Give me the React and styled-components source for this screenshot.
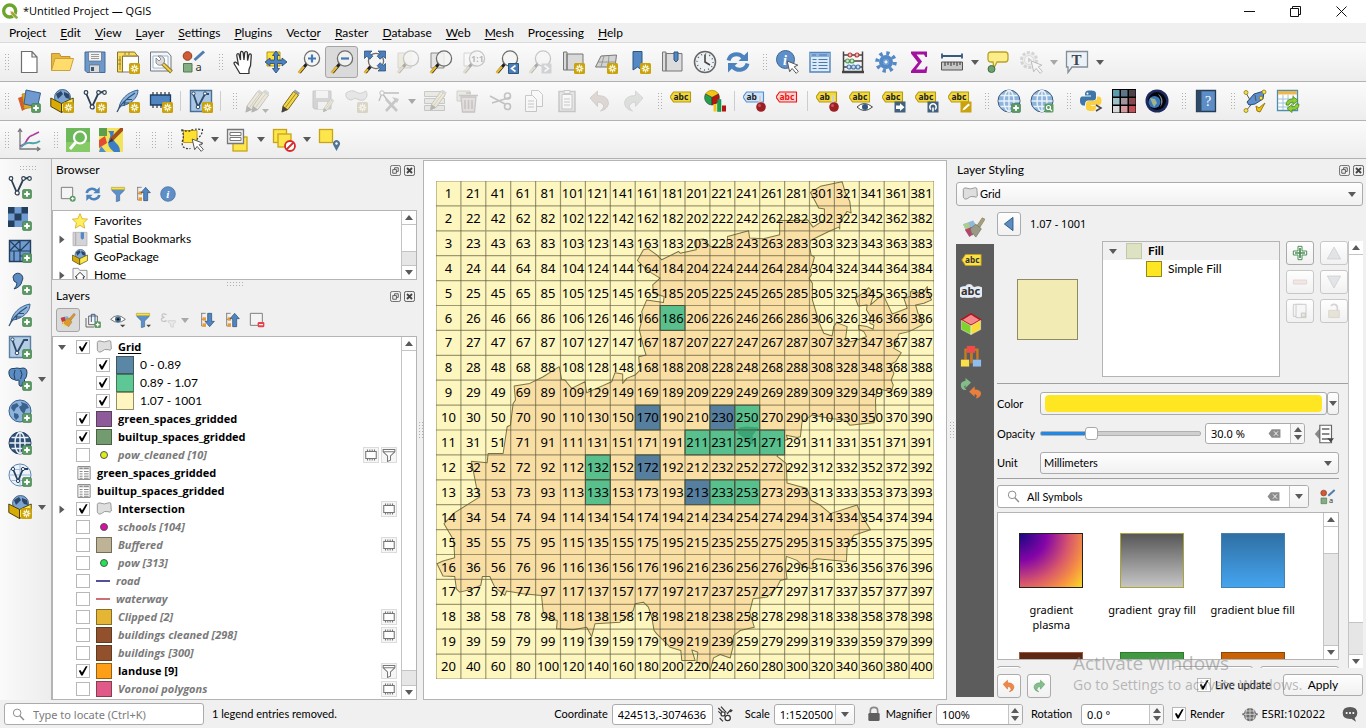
import React from "react";
import styled, { createGlobalStyle, css } from "styled-components";

const uiFont = '"Open Sans", "Noto Sans", sans-serif';
const formFont = '"Noto Sans", "Open Sans", sans-serif';
const labelFont = 'Lato, "Open Sans", sans-serif';

const GlobalStyle = createGlobalStyle`
  * { box-sizing: border-box; }
  body { margin: 0; background: #f0f0f0; color: #000; font: 12px/16px ${uiFont}; overflow: hidden; }
  button, input, select { font: inherit; color: inherit; margin: 0; padding: 0; }
  svg { display: block; flex: none; }
`;

/* ---------- icon drawings, all on a 24 x 24 field ---------- */

const StarBadge = () => (
  <g>
    <rect x="13" y="13" width="11" height="11" rx="1.5" fill="#c9a20c" />
    <path d="M18.500 14.600v7.800M14.600 18.500h7.800M15.800 15.800l5.400 5.400M21.200 15.800l-5.400 5.400" stroke="#fffbe0" strokeWidth="1.300" />
    <circle cx="18.500" cy="18.500" r="1.100" fill="#c9a20c" />
  </g>
);
const PlusBadge = () => (
  <g>
    <rect x="14.5" y="14.5" width="9" height="9" rx="1.5" fill="#5b9a62" stroke="#3f7a48" strokeWidth=".6" />
    <path d="M19 16.2v5.6M16.2 19h5.6" stroke="#fff" strokeWidth="2" />
  </g>
);
const Lens = ({ cx = 15, cy = 8.5 }) => (
  <g>
    <path d={`M${cx - 5} ${cy + 5}L2.5 22.5`} stroke="#222" strokeWidth="3" />
    <path d={`M${cx - 8} ${cy + 8.2}L1.5 23`} stroke="#e8b92e" strokeWidth="2.4" />
    <circle cx={cx} cy={cy} r="7.6" fill="#f4f4f2" fillOpacity=".85" stroke="#6d6d6d" strokeWidth="1.3" />
  </g>
);
const Tag = ({ fill = "#f2d83a", line = "#b39a12", ink = "#222", text = "abc" }) => (
  <g>
    <path d="M0 8L3.500 3H20.500V13H3.500Z" fill={fill} stroke={line} strokeWidth="1.1" strokeLinejoin="round" />
    <text x="3.500" y="11" fontSize="8.5" fontWeight="700" fontFamily="Noto Sans, sans-serif" fill={ink}>{text}</text>
  </g>
);
const Pin = () => (
  <g>
    <path d="M17 6.5v8" stroke="#fff" strokeWidth="2.4" />
    <path d="M17 6.5v8" stroke="#888" strokeWidth=".8" />
    <circle cx="18" cy="18" r="4.8" fill="#9c1f24" />
    <circle cx="16.500" cy="16.5" r="1.5" fill="#cb5458" />
  </g>
);
const Globe = ({ fill = "#8eb4dc", line = "#38597f", land }) => (
  <g>
    <circle cx="12" cy="12" r="11" fill={fill} stroke={line} strokeWidth="1" />
    {land ? (
      <path d="M4 6l5-2 2 3-3 2-2 4-3-4ZM13 3l6 2 2 4-3 1-2 5-3-3-2-4 3-2ZM6 14l4 1 1 3-3 3-2-3Z" fill={line} />
    ) : (
      <g fill="none" stroke="#e9f1f9" strokeWidth="1.4">
        <ellipse cx="12" cy="12" rx="5" ry="10.5" />
        <path d="M12 1.5v21M1.5 12h21M3.5 6.5h17M3.5 17.5h17" />
      </g>
    )}
  </g>
);
const VLine = ({ c = "#2d3f52" }) => (
  <g stroke={c} fill="none" strokeWidth="1.8">
    <path d="M3 4L9 18L15 5q1-2 5-2" />
    <g fill="#fff" strokeWidth="1.2">
      <circle cx="3" cy="3.5" r="1.8" /><circle cx="9.2" cy="18" r="2" /><circle cx="15.5" cy="3.5" r="1.8" /><circle cx="21.5" cy="3.5" r="1.8" />
    </g>
  </g>
);
const Feather = () => (
  <g>
    <path d="M3 19C4 11 11 3 22 1C22 9 15 15 5.500 17Z" fill="#8fb5df" stroke="#3c6490" strokeWidth="1" />
    <path d="M1 23Q5 13 19 4M7 14h6M10 10.500h6M8 17l1-5" stroke="#2f5379" strokeWidth="1.2" fill="none" />
  </g>
);
const GeoBox = () => (
  <g>
    <circle cx="12.500" cy="8.500" r="8" fill="#7da5d3" stroke="#2b4a70" strokeWidth=".8" />
    <path d="M6 5l5-3 2 3-3 3-2 2ZM14 3l5 2 1 5-4-1-2-3Z" fill="#2c4668" />
    <path d="M.800 9L11.500 14.500V23.500L.800 17.500Z" fill="#d9ab05" stroke="#3d3200" strokeWidth=".9" />
    <path d="M11.500 14.500L23.200 9V17.500L11.500 23.500Z" fill="#fbe94e" stroke="#3d3200" strokeWidth=".9" />
  </g>
);
const Arrows = ({ c = "#4c82bd" }) => (
  <g fill="none" stroke={c} strokeWidth="4">
    <path d="M2.500 10.500C4 4 12 2 17 7" /><path d="M21.500 13.500C20 20 12 22 7 17" />
    <path d="M22 1.500V11h-9.500Z" fill={c} stroke="none" /><path d="M2 22.500V13h9.500Z" fill={c} stroke="none" />
  </g>
);
const Funnel = ({ line = "#35597f" }) => (
  <g>
    <path d="M3 3h18v4l-6.500 6.500V22l-5 1.500V13.500L3 7Z" fill="#5c90cc" stroke={line} strokeWidth=".8" />
    <path d="M2 2h20v3.500H2Z" fill="#f6e04c" stroke="#b79c1a" strokeWidth=".8" />
  </g>
);
const Pencil = () => (
  <g>
    <path d="M5 17L15.500 2.500L20.500 6L10 20.500L4 23Z" fill="#f4d548" stroke="#7a6a1a" strokeWidth="1" />
    <path d="M15.500 2.500l1.500-2 5 3.500-1.500 2Z" fill="#9aa0a6" /><path d="M5 17l5 3.500L3.500 23.500Z" fill="#444" />
    <path d="M7.500 18.500L18 4.300" stroke="#a08a22" strokeWidth="1" />
  </g>
);
const Polygon = () => (
  <path d="M2 5Q3 2 6 3Q12 6 20 2.500Q23 2 22.500 7L23 15Q22 18 18 16Q13 14 8 19Q3 21 2 16Z" fill="#dedede" stroke="#8c8c8c" strokeWidth="1.3" />
);
const Cursor = () => (
  <path transform="translate(4 4.500) scale(.820)" d="M10 8l3 13 3-4 5 6 2.500-2.500-5-5.500 4.500-2Z" fill="#fff" stroke="#555" strokeWidth="1.200" />
);
const Brush = ({ tone = "#e09a2c" }) => (
  <g>
    <path d="M1 9l10-3 5 8-9 7Z" fill="#7fb3dd" /><path d="M1 9l6-2 2 8-5 3Z" fill="#c7383f" /><path d="M3 15l6-2 4 5-6 4Z" fill="#f3dd4b" />
    <path d="M13 11L21 2l2 2-7 9Z" fill={tone} stroke="#7d6a44" strokeWidth=".7" />
    <path d="M9 11l4-2 5 6-5 7-7-5Z" fill={tone} stroke="#8b7b55" strokeWidth=".7" />
  </g>
);
const BrushMuted = () => (
  <g>
    <path d="M0 9l11-4 6 9-9 8Z" fill="#8fb9da" /><path d="M0 9l6-2 2 6-5 3Z" fill="#a9cf8e" /><path d="M2 15l7-3 4 6-6 5Z" fill="#b3476b" />
    <path d="M15 11l6-9 3 1.500-6 9.500Z" fill="#a8a078" stroke="#827b5c" strokeWidth=".700" />
    <path d="M8 14l6-5 6 5-6 9q-2-2-3-4l-1 2Z" fill="#9a9b86" stroke="#75765f" strokeWidth=".800" />
  </g>
);
const TreeArrow = ({ up }) => (
  <g>
    <path d="M3 2h7M4 2v19h6M4 11h5" stroke="#777" strokeWidth="1.3" fill="none" />
    <rect x="5.500" y="8" width="5" height="5" fill="#f09a2e" /><rect x="5.500" y="17" width="5" height="5" fill="#f09a2e" />
    <path d={up ? "M16 2l7 8h-4v12h-6V10H9Z" : "M16 22l7-8h-4V2h-6v12H9Z"} fill="#4f86c2" stroke="#27496f" strokeWidth="1" />
  </g>
);
const Yellow = ({ x, y, s = 11 }) => <rect x={x} y={y} width={s} height={s} fill="#fde64b" stroke="#c8a514" strokeWidth="1.3" />;

const art = {
  qgis: <g><circle cx="11.500" cy="12" r="9" fill="none" stroke="#6aa62e" strokeWidth="5" /><path d="M12 12l4 .500L24 21l-4 2.500-7-7.500Z" fill="#f0902c" stroke="#fff" strokeWidth=".8" /><path d="M15 15l8 8" stroke="#7cb342" strokeWidth="3" /></g>,
  page: <path d="M4.500 1.500H15l5 5.500v15.500h-15.500ZM15 1.500V7h5" fill="#fff" stroke="#6e6e6e" strokeWidth="1.2" />,
  folder: <g><path d="M1.500 20.500V3.500h8l1.500 3h9v3" fill="#e7b73f" stroke="#c1922d" /><path d="M1.500 20.500L5 8.500h18.500L20 20.500Z" fill="#ffdc6b" stroke="#cba23a" /></g>,
  save: <g><path d="M2 2h20v20.500H4L2 20.500Z" fill="#6c98cb" stroke="#426a9a" /><path d="M5.500 2h13v9h-13Z" fill="#f2f2f2" stroke="#5c6b7c" strokeWidth=".7" /><path d="M8 4.500h8M8 6.500h8M8 8.500h8" stroke="#999" /><path d="M6.500 15h10v7.500h-10Z" fill="#dcdcdc" stroke="#5c6b7c" strokeWidth=".7" /><path d="M8 17h3v4H8Z" fill="#40566e" /></g>,
  newLayout: <g><path d="M6 6h16.500v16H6Z" fill="#fff" stroke="#777" /><path d="M1.500 2h17l3 4H6.500v16h-5Z" fill="#f8dc66" stroke="#8a7420" /><path d="M4 6v14M9 2v3M13 2v3M2 10h3M2 14h3" stroke="#8a7420" strokeWidth=".8" /><StarBadge /></g>,
  manager: <g><path d="M1.500 2h17l3.500 4v15h-20.500Z" fill="#f2f6fa" stroke="#777" /><path d="M4 6h15v12H4Z" fill="#fff" stroke="#9cb6d4" /><path d="M13 13l9.500 9" stroke="#8d7723" strokeWidth="4" /><path d="M13 13l9 8.500" stroke="#f1cf4c" strokeWidth="2" /><path d="M7 8l3 3 2-2-3-3q4-1 6 2t-1 6q-4 3-7-1Z" fill="#ddd" stroke="#777" strokeWidth=".8" /></g>,
  styles: <g><circle cx="5.500" cy="6" r="4.300" fill="#cf5c34" stroke="#8d3a1d" /><path d="M22 1.500L12.500 10" stroke="#4f7db0" strokeWidth="3" /><path d="M1.500 13.500h8.500v8.500H1.500Z" fill="#84ad84" stroke="#4f7d52" /><text x="13.500" y="21" fontSize="11" fontFamily="Noto Sans, sans-serif" fill="#333">a</text></g>,
  hand: <path d="M7.500 23.500L3 15.500q-2.500-3.500.500-3.500l2.500 2.500-1.500-9q0-2.500 2-1.500l1.500 6L8 2.500q1-2.200 2.500 0l.800 7.500.700-7.500q1.300-2 2.500 0l.200 8 1.300-6q1.500-1.500 2.200.500l-.700 10.500-1.500 4v4Z" transform="translate(1 0) scale(1.060 1)" fill="#fff" stroke="#333" strokeWidth="1.200" />,
  pan: <g><path d="M3 2h13v14H3Z" fill="#fbe13d" stroke="#b6960f" /><path d="M12 1l3.500 4.500h-2v4.500H18V8l5 4-5 4v-2.500h-4.500v5h2L12 23l-3.500-4.500h2V13.500H6V16l-5-4 5-4v2h4.500V5.500h-2Z" fill="#4c82c4" stroke="#24466f" strokeWidth=".8" /></g>,
  zoomIn: <g><Lens /><path d="M15 4.500v8M11 8.500h8" stroke="#4478b8" strokeWidth="2.200" /></g>,
  zoomOut: <g><Lens /><path d="M11 8.500h8" stroke="#4478b8" strokeWidth="2.200" /></g>,
  zoomFull: <g><Lens cx={13} cy={11} /><path d="M1.500 1h7.500L6.800 3.200l3 3-3 3-3-3L1.500 8.500ZM22.500 1h-7.500l2.200 2.200-3 3 3 3 3-3 2.300 2.300ZM22.500 21v-7.500l-2.300 2.200-3-3-3 3 3 3-2.200 2.300Z" fill="#4b7fbd" stroke="#24466f" strokeWidth=".7" /></g>,
  zoomSel: <g><path d="M2 3h13v15H2Z" fill="#f3dc55" stroke="#999" /><Lens /></g>,
  zoomLayer: <g><path d="M2 3h13v15H2Z" fill="#e4e4e4" stroke="#8b8b8b" /><Lens /></g>,
  zoomNative: <g><path d="M2 3h12v13H2Z" fill="#fff" stroke="#999" /><Lens /><text x="9" y="12" fontSize="9" fontWeight="700" fontFamily="Noto Sans, sans-serif" fill="#444">1:1</text></g>,
  zoomLast: <g><Lens /><path d="M13.500 13.500h10v10h-10Z" fill="#4a7db8" stroke="#2c5580" /><path d="M20.500 15.500l-4 3 4 3" stroke="#fff" strokeWidth="1.600" fill="none" /></g>,
  zoomNext: <g><Lens /><path d="M13.500 13.500h10v10h-10Z" fill="#8a9aaa" /><path d="M16.500 15.500l4 3-4 3" stroke="#fff" strokeWidth="1.600" fill="none" /></g>,
  mapView: <g><path d="M2.500 2h3.500v18H2.500ZM6 4h16v16H6Z" fill="#d9d9d9" stroke="#777" /><StarBadge /></g>,
  map3d: <g><path d="M1.500 17L7 6l15.500-1-1.500 12Z" fill="#d3d3d3" stroke="#777" /><path d="M4 12h18M10 6L7 17M15 5.500L14 17" stroke="#8c8c8c" strokeWidth=".8" /><StarBadge /></g>,
  newMark: <g><path d="M6 1.500h9V20l-4.500-3L6 20Z" fill="#5488c4" stroke="#2c5580" /><StarBadge /></g>,
  marks: <g><path d="M2.500 2h3.500v19H2.500ZM6 3.500h16V21H6Z" fill="#dcdcdc" stroke="#777" /><path d="M14 2h4v8l-2 2-2-2Z" fill="#5488c4" stroke="#2c5580" /></g>,
  clock: <g><circle cx="12" cy="12" r="10.500" fill="#eef1f3" stroke="#666" strokeWidth="1.500" /><circle cx="12" cy="12" r="8" fill="none" stroke="#567" strokeDasharray="1 3.190" strokeWidth="1.500" /><path d="M12 4.500V12l5 3" fill="none" stroke="#444" strokeWidth="1.600" /></g>,
  refresh: <Arrows />,
  identify: <g><circle cx="10.500" cy="9.500" r="9" fill="#5e8fc9" stroke="#3e6795" /><text x="8" y="14.500" fontSize="14" fontStyle="italic" fontWeight="700" fontFamily="Liberation Serif, serif" fill="#fff">i</text><Cursor /></g>,
  table: <g><path d="M2 2.500h20v19.500H2Z" fill="#dcebf9" stroke="#5484ba" strokeWidth="1.400" /><path d="M2 3h20v4H2Z" fill="#8bb2df" /><path d="M4.500 9.500h4M10.500 9.500h9M4.500 12.500h4M10.500 12.500h9M4.500 15.500h4M10.500 15.500h9M4.500 18.500h4M10.500 18.500h9M4 5h4M11 5h8" stroke="#4d7ba9" strokeWidth="1.200" /></g>,
  abacus: <g><path d="M2.500 1.500v20M21.500 1.500v20M3 5h18M3 11h18M3 17h18" stroke="#444" strokeWidth="1.500" /><path d="M1 22h22" stroke="#444" strokeWidth="2.500" /><g strokeWidth="1.200"><g fill="#f5b5b5" stroke="#b83a3a"><circle cx="9" cy="5" r="2" /><circle cx="16" cy="5" r="2" /></g><g fill="#c6ebc6" stroke="#53985a"><circle cx="6.500" cy="11" r="2" /><circle cx="11" cy="11" r="2" /></g><g fill="#cbe0f5" stroke="#4978ad"><circle cx="8" cy="17" r="2" /><circle cx="12.500" cy="17" r="2" /><circle cx="17" cy="17" r="2" /></g></g></g>,
  gear: <g><circle cx="12" cy="12" r="8.800" fill="none" stroke="#5489c6" strokeWidth="4" strokeDasharray="3.200 3.710" /><circle cx="12" cy="12" r="5" fill="#8db4e0" stroke="#5489c6" strokeWidth="4" /><circle cx="12" cy="12" r="2.200" fill="#f2f6fb" stroke="#5489c6" /></g>,
  sigma: <path d="M4 1.500h16v5.500h-1.500L17 4.500H9.500L15 11.500 9 19.500h8.500l1.500-3h1.500l-1 6.500H4v-2l7-8.500L4 3.500Z" fill="#a3119f" />,
  measure: <g><path d="M2 3.500v5M22 3.500v5M2 6h20" stroke="#36597f" strokeWidth="1.800" /><path d="M1.500 12h21v8h-21Z" fill="#c6c6c6" stroke="#555" /><path d="M5 12v4M8 12v3M11 12v4M14 12v3M17 12v4M20 12v3" stroke="#333" /></g>,
  tip: <g><path d="M5 2h14q3 0 3 3v4q0 3-3 3h-8l-3 6-1-6H5q-3 0-3-3V5q0-3 3-3Z" fill="#fbed8a" stroke="#bba125" strokeWidth="1.300" /><circle cx="5.500" cy="19" r="3.500" fill="#6da26f" stroke="#3e6f42" /></g>,
  action: <g><circle cx="10" cy="10" r="7.500" fill="#dedede" stroke="#999" strokeWidth="3" strokeDasharray="3 1.710" /><circle cx="10" cy="10" r="4.500" fill="#f5f5f5" stroke="#aaa" /><path d="M9 7.500l4 2.500-4 2.500Z" fill="#888" /><Cursor /></g>,
  annot: <g><path d="M1.500 1.500h21v15.500H7L3 22.500V17H1.500Z" fill="#eaf1f8" stroke="#858d95" strokeWidth="1.300" /><text x="6.500" y="14.500" fontSize="15" fontWeight="700" fontFamily="Liberation Serif, serif" fill="#444">T</text></g>,

  dataSource: <g><path d="M1 9l8-3 4 11-8 5Z" fill="#d65b31" /><path d="M5 5l10-2 2 15-10 2Z" fill="#e0a717" stroke="#9d7313" strokeWidth=".6" /><path d="M9 1l14.500 3-3 14L7 15Z" fill="#6f99cf" stroke="#365f8f" /><PlusBadge /></g>,
  geopkg: <g><GeoBox /><StarBadge /></g>,
  geopkgPlain: <GeoBox />,
  shape: <g><VLine /><StarBadge /></g>,
  feather: <g><Feather /><StarBadge /></g>,
  chip: <g><path d="M4 3v16M8 3v16M12 3v16M16 3v16M20 3v16" stroke="#333" strokeWidth="1.200" /><path d="M1.500 6h20v10h-20Z" fill="#5185c1" stroke="#1f4064" strokeWidth="1.300" /><StarBadge /></g>,
  virtual: <g><path d="M1.500 1.500h21v21h-21Z" fill="#a9c6e5" stroke="#4a6f97" strokeWidth="1.400" /><path d="M4 4L9 18L16 5h4" fill="none" stroke="#2d4a68" strokeWidth="1.800" /><g fill="#fff" stroke="#2d4a68"><circle cx="4.500" cy="4.500" r="1.600" /><circle cx="9" cy="18" r="1.800" /><circle cx="16" cy="4.500" r="1.600" /></g><StarBadge /></g>,
  edits: <g><g transform="translate(-3 0)"><Pencil /></g><g transform="translate(3 0)"><Pencil /></g><path d="M17 20h7l-3.500 4Z" fill="#444" /></g>,
  pencil: <Pencil />,
  saveEdit: <g><path d="M2 2h18v18H3.500L2 18.500Z" fill="#9a9a9a" stroke="#777" /><path d="M5 2h12v7H5ZM7 13h9v7H7Z" fill="#eee" /><g transform="translate(10 9) scale(.600)"><Pencil /></g></g>,
  addPoly: <g><path d="M2 4q6-4 10-1t10-1q3 5-2 9-4 1-7-1t-5 1q-7 0-6-7Z" fill="#c9c9c9" stroke="#888" /><StarBadge /></g>,
  vertex: <g><path d="M2 12L5 4h17M5 4l6 8" stroke="#555" strokeWidth="1.300" fill="none" /><circle cx="5" cy="4" r="2.200" fill="#fff" stroke="#555" /><path d="M9 10l11 12M20 10L9 22" stroke="#777" strokeWidth="2.600" /><path d="M15 8l7 2-2 4Z" fill="#777" /></g>,
  modify: <g><path d="M1.500 2.500h20v5h-20ZM1.500 9.500h20v5h-20ZM1.500 16.500h20v5h-20Z" fill="#d2d2ae" stroke="#777" /><g transform="translate(4 0) scale(.900)"><Pencil /></g></g>,
  trash: <g><path d="M1 2h13v10H1Z" fill="#d9d5a0" stroke="#888" /><path d="M5 8h15l-1.500 15h-12Z" fill="#d8b4b4" stroke="#966" strokeWidth="1.300" /><path d="M3 6.500h19M9 11v9M12.500 11v9M16 11v9M10 4h5" stroke="#966" strokeWidth="1.600" /></g>,
  cut: <g stroke="#666" strokeWidth="1.600" fill="none"><path d="M1 7l15 8M3 14L22 8" /><circle cx="18.500" cy="7" r="3" /><circle cx="18.500" cy="17.500" r="3" /></g>,
  copy: <g fill="#fff" stroke="#777"><path d="M9.500 1.500h7l4 4v12h-11Z" /><path d="M3.500 6.500h7l4 4v12h-11Z" /><path d="M6 12h6M6 15h6M6 18h6" /></g>,
  paste: <g stroke="#777"><path d="M4 2.500h16v20H4Z" fill="#ccc" strokeWidth="1.500" /><path d="M7 5.500h10V20H7Z" fill="#fff" /><path d="M9 1.500h6v3H9Z" fill="#eee" /><path d="M9 10h6M9 13h6M9 16h6" /></g>,
  undo: <path d="M2 9L9.500 2v4.500q11 0 11 8-1 6-8 7.500 5-4 2-7-2-2-5-2v4.500Z" fill="#d39a80" stroke="#a0705a" strokeWidth=".800" />,
  redo: <path d="M22 9L14.500 2v4.500q-11 0-11 8 1 6 8 7.500-5-4-2-7 2-2 5-2v4.500Z" fill="#a9bfa9" stroke="#7b967b" strokeWidth=".800" />,
  undoHot: <path d="M2 9L9.500 2v4.500q11 0 11 8-1 6-8 7.500 5-4 2-7-2-2-5-2v4.500Z" fill="#ee8847" stroke="#c96428" strokeWidth=".800" />,
  redoHot: <path d="M22 9L14.500 2v4.500q-11 0-11 8 1 6 8 7.500-5-4-2-7 2-2 5-2v4.500Z" fill="#83c08a" stroke="#4d8a56" strokeWidth=".800" />,
  tag: <Tag />,
  diagram: <g><path d="M9 8.500L2.500 5A7.500 7.500 0 0 1 15.500 5Z" fill="#f4c414" stroke="#9a7a05" strokeWidth=".600" /><path d="M9 8.500L2.500 5A7.500 7.500 0 0 0 9 16Z" fill="#23a04d" stroke="#333" strokeWidth=".600" /><path d="M9 8.500V16A7.500 7.500 0 0 0 15.500 5Z" fill="#b8150f" stroke="#333" strokeWidth=".600" /><path d="M10.500 15h3v7.500h-3Z" fill="#f6c318" /><path d="M14.500 10.500h3.500v12h-3.500Z" fill="#18a04e" stroke="#084" strokeWidth=".500" /><path d="M19 16.500h4v6h-4Z" fill="#b8150f" /></g>,
  tagBlue: <g><Tag fill="#cfe2f7" line="#4e8fd6" text="ab" /><Pin /></g>,
  tagRed: <Tag fill="#fbd3d3" line="#ee1111" ink="#ee1111" />,
  tagPin: <g><Tag text="ab" /><Pin /></g>,
  tagEye: <g><Tag /><path d="M8 18q7-7 15.500 0-8.500 7-15.500 0Z" fill="#fff" stroke="#444" /><circle cx="16" cy="18" r="3" fill="#33587f" /></g>,
  tagMove: <g><Tag /><path d="M12.500 12.500h11v11h-11Z" fill="#42617c" /><path d="M14 16.500h4v-2.200l4.500 3.900-4.500 3.900v-2.200H14Z" fill="#fff" /></g>,
  tagTurn: <g><Tag /><path d="M12.500 12.500h11v11h-11Z" fill="#42617c" /><path d="M16 20.500a3.200 3.200 0 1 1 4 0M18 22.500v-4" stroke="#fff" strokeWidth="1.600" fill="none" /></g>,
  tagEdit: <g><Tag /><path d="M12.500 12.500h11v11h-11Z" fill="#c9a20c" /><path d="M14.500 21.500l1-2.500 5-4.500 1.500 1.500-5 4.500Z" fill="#fff" /></g>,
  globePlus: <g><Globe /><PlusBadge /></g>,
  globeFind: <g><Globe /><rect x="14.500" y="14.500" width="9" height="9" rx="1.500" fill="#5b9a62" /><circle cx="18.500" cy="18.500" r="2" fill="none" stroke="#fff" strokeWidth="1.200" /><path d="M20 20l2 2" stroke="#fff" strokeWidth="1.200" /></g>,
  python: <g><path d="M11 1.500c-5 0-5 2-5 5h6v1H3.500C1 7.500 1 10 1 12s1 4.500 3.500 4.500H6c0-4 1-5 4-5h4c2 0 3-1 3-3V5c0-3-2-3.500-6-3.500Z" fill="#3f76a8" /><path d="M12 22c5 0 5-2 5-5h-5v-1h7.500c2.500 0 3-2 3-4.500s-1-4-3.500-4h-1c0 4-1 4.500-4 4.500h-4c-2 0-3 1-3 3v3c0 3 1.500 4 5 4Z" fill="#fbd03f" /><circle cx="8.500" cy="4.500" r="1" fill="#fff" /><path d="M17 16l5 3-5 3" stroke="#444" strokeWidth="1.500" fill="none" /></g>,
  pixels: <g><path d="M0 0h24v24H0Z" fill="#000" />{["#5b9cac", "#5d7687", "#4f4149", "#9dc1c6", "#a0949d", "#89474e", "#d8d8d8", "#d39b9d", "#bd5155"].map((c, i) => <rect key={i} x={1 + (i % 3) * 8} y={1 + Math.floor(i / 3) * 8} width="6.500" height="6.500" fill={c} />)}</g>,
  earth: <g><circle cx="12" cy="12" r="11.500" fill="#1c2a5e" /><circle cx="12" cy="12" r="9" fill="#05070d" /><circle cx="9.500" cy="13" r="6" fill="#3c78b8" /><path d="M5 9l5 1 2 4-3 4-2-4Z" fill="#9fb58f" /><path d="M13 5a8 8 0 0 1 2 13 12 12 0 0 0-2-13Z" fill="#8a9097" /></g>,
  help: <g><path d="M2.500 1.500h19v21h-19Z" fill="#5c8dc6" stroke="#263c54" strokeWidth="1.300" /><path d="M2.500 1.500h5v21h-5Z" fill="#2f4a66" /><text x="11" y="17" fontSize="14" fontFamily="Liberation Serif, serif" fill="#fff">?</text></g>,
  topo: <g><path d="M4 13l7-8 10-3-1 8-8 5-6 1Z" fill="#5b8fcf" stroke="#2b4b70" /><path d="M3 22q3-4 5-6M3 4l4 7M12 6l1 6" stroke="#555" fill="none" /><g fill="#f3e04b" stroke="#8a7a1a" strokeWidth=".800"><circle cx="3" cy="3.500" r="2" /><circle cx="21" cy="3" r="2" /><circle cx="3" cy="21.500" r="2" /><circle cx="18" cy="9" r="1.800" /></g><path d="M13 17l3 2 6-5-5 9-3-1Z" fill="#f1c40f" stroke="#9a7d0a" /></g>,
  reload: <g><path d="M1.500 1.500h20v20h-20Z" fill="#fff" stroke="#4f8fae" strokeWidth="1.300" /><path d="M2 2h19v3.500H2Z" fill="#f0b64c" /><path d="M2 10h19M2 14h19M2 18h19M7 6v15M12 6v15M17 6v15" stroke="#9cc3dc" /><path d="M10 16q0-6 7-6V7.500l5 4-5 4V13q-4 0-4 3ZM23 15q0 6-7 6v2.500l-5-4 5-4V18q4 0 4-3Z" fill="#8fce38" stroke="#4b8a12" strokeWidth=".800" /></g>,

  plot: <g><path d="M3 1v20h20M1 4l2-3 2 3M20 19l3 2-3 2M3 21" stroke="#777" fill="none" strokeWidth="1.300" /><path d="M3 18q5-1 7-6 2-4 6-5l6-3" stroke="#b13fa0" fill="none" strokeWidth="1.800" /><path d="M4 19q5-5 10-4t9-2" stroke="#4aa6a8" fill="none" strokeWidth="1.800" /></g>,
  quickSearch: <g><path d="M0 0h24v24H0Z" fill="#6db85a" /><path d="M0 14h24v10H0Z" fill="#86cb66" /><circle cx="14" cy="9.500" r="6" fill="none" stroke="#fff" strokeWidth="2.200" /><path d="M9.500 14.500L4 21" stroke="#fff" strokeWidth="3" /></g>,
  osm: <g><path d="M0 0h24v24H0Z" fill="#f2e35b" /><path d="M0 0h8v8H0Z" fill="#5e9f4d" /><path d="M9 3q4 3 1 9t5 12h6q0-6-4-9t-2-12Z" fill="#3b7ec8" /><path d="M0 12l6-4 2 7-8 5Z" fill="#e04e2f" /><path d="M2 18l5 6H0Z" fill="#4d8fcb" /><path d="M24 0L12 12" stroke="#a5501b" strokeWidth="4" /><path d="M13 10l-4 5 5-2Z" fill="#333" /></g>,
  selectFeat: <g><path d="M3.500 2.500h13.500v12H3.500Z" fill="#fde030" stroke="#c29b12" /><path d="M1.500 1.500q6 3 9 1t12-1q0 5-4 8t4 7M1.500 1.500q3 6 1 11-2 9 8 8" fill="none" stroke="#333" strokeDasharray="2 1.500" strokeWidth="1.200" /><Cursor /></g>,
  selectForm: <g><Yellow x={7} y={9} s={14} /><path d="M1.500 1.500h16v14h-16Z" fill="#eee" stroke="#777" strokeWidth="1.300" /><path d="M4 4.500h11v3H4ZM4 9.500h11v3H4Z" fill="#fff" stroke="#777" /></g>,
  deselect: <g><Yellow x={1.500} y={1.500} s={13} /><Yellow x={6} y={6} s={13} /><circle cx="18" cy="18" r="5" fill="#fff" stroke="#d62a2a" strokeWidth="1.800" /><path d="M14.500 21.500l7-7" stroke="#d62a2a" strokeWidth="1.800" /></g>,
  selectLoc: <g><Yellow x={1.500} y={1.500} s={13} /><path d="M18.500 23l-3-5.500a3.500 3.500 0 1 1 6 0Z" fill="#517492" /><circle cx="18.500" cy="15.500" r="1.200" fill="#fff" /></g>,

  vAdd: <g><VLine /><PlusBadge /></g>,
  rasterAdd: <g><path d="M0 0h20v20H0Z" fill="#6f9bd0" /><path d="M0 0h6.500v6.500H0ZM13.500 0h6.500v6.500h-6.500ZM6.500 6.500h7v7h-7ZM0 13.500h6.500V20H0Z" fill="#24405f" /><PlusBadge /></g>,
  meshAdd: <g><path d="M1.500 1.500h21v21h-21Z" fill="#6f9bd0" stroke="#24405f" strokeWidth="1.400" /><path d="M1.500 12h21M12 1.500v21M1.500 1.500L12 12M12 1.500L1.500 12M12 12L22.500 1.500M12 17h10M6 12v10" stroke="#24405f" strokeWidth="1.200" /><PlusBadge /></g>,
  csvAdd: <g><path d="M5 6a5 5 0 1 1 9 4q-1 6-8 8 3-3 3-6-4-1-4-6Z" fill="#5c8bc1" stroke="#2a4668" /><PlusBadge /></g>,
  featherAdd: <g><Feather /><PlusBadge /></g>,
  virtualAdd: <g><path d="M1.500 1.500h21v21h-21Z" fill="#b5cce5" stroke="#5b7fa5" strokeWidth="1.400" /><path d="M4 4L9 18L16 5h4" fill="none" stroke="#2d4a68" strokeWidth="1.800" /><g fill="#fff" stroke="#2d4a68"><circle cx="4.500" cy="4.500" r="1.600" /><circle cx="9" cy="18" r="1.800" /></g><PlusBadge /></g>,
  pgAdd: <g><path d="M1 7Q0 1 6 1.500q3-1 6 0 7-2 7 4 0 5-2.500 7v3h-2l-.500 3.500q-2.500 1-3-1.500v-4.500q-3 1-5-.500-4-.500-5-5.500Z" fill="#5b8cc3" stroke="#24405f" /><path d="M7 3q-2 5 0 9M12.500 3q3 4 0 9" stroke="#24405f" fill="none" /><PlusBadge /></g>,
  wmsAdd: <g><Globe fill="#8eb4dc" line="#3a628f" land /><PlusBadge /></g>,
  wcsAdd: <g><Globe fill="#2f4f75" line="#24405f" /><PlusBadge /></g>,
  wfsAdd: <g><circle cx="12" cy="12" r="11" fill="#edf3f9" stroke="#5b86b5" /><path d="M1.500 12h21M3.500 6.500h17M3.500 17.500h17M12 1v22" stroke="#9dbad9" /><path d="M5 6L10 18L15 6h5" stroke="#24405f" strokeWidth="1.800" fill="none" /><g fill="#fff" stroke="#24405f"><circle cx="5" cy="6" r="1.600" /><circle cx="10" cy="18" r="1.600" /><circle cx="15" cy="6" r="1.600" /></g><PlusBadge /></g>,

  boxAdd: <g><path d="M2 2h17v17H2Z" fill="#f4f4f4" stroke="#777" strokeWidth="1.400" /><circle cx="19" cy="19" r="4.500" fill="#5b9a62" /><path d="M19 16.500v5M16.500 19h5" stroke="#fff" strokeWidth="1.500" /></g>,
  boxDel: <g><path d="M2 2h18v18H2Z" fill="#f4f4f4" stroke="#777" strokeWidth="1.400" /><rect x="13" y="15" width="10" height="8" rx="2" fill="#e8404a" /><path d="M15 19h6" stroke="#fff" strokeWidth="1.800" /></g>,
  funnel: <Funnel />,
  collapse: <TreeArrow up />,
  expand: <TreeArrow />,
  info: <g><circle cx="12" cy="12" r="11" fill="#5e8fc9" stroke="#3e6795" /><text x="9.500" y="18" fontSize="17" fontStyle="italic" fontWeight="700" fontFamily="Liberation Serif, serif" fill="#fff">i</text></g>,
  star: <path d="M12 1l3.300 7.500 8 .700-6 5.500 1.800 8-7.100-4.200-7.100 4.200 1.800-8-6-5.500 8-.700Z" fill="#fdf05a" stroke="#d7a520" strokeWidth="1.200" />,
  bookmark: <g><path d="M1.500 2h4v20h-4ZM5.500 2h17v20h-17Z" fill="#d4d4d8" stroke="#aaa" /><path d="M13 2h5v9l-2.500 2L13 11Z" fill="#5488c4" /></g>,
  home: <g><path d="M1.500 2h8l2 3h11v18h-21Z" fill="#f5f5f5" stroke="#888" strokeWidth="1.300" /><path d="M5 15l7-7 7 7h-2v6H7v-6Z" fill="#fff" stroke="#333" strokeWidth="1.500" /></g>,
  brush: <Brush />,
  group: <g fill="none" stroke="#666" strokeWidth="1.500"><path d="M1.500 9v13.500h12" /><path d="M5.500 6v13h13V6Z" fill="#f4f4f4" /><path d="M9.500 15V3.500h5.500V15" stroke="#375f8c" /><PlusBadge /></g>,
  eye: <g><path d="M1 11Q11 0 23 11Q12 20 1 11Z" fill="#fff" stroke="#555" strokeWidth="1.200" /><circle cx="12" cy="11" r="4.500" fill="#456b93" /><circle cx="12" cy="11" r="1.800" fill="#111" /><path d="M15 19h8l-4 4Z" fill="#444" /></g>,
  funnelMenu: <g><Funnel /><path d="M17 19h7l-3.500 4Z" fill="#444" /></g>,
  expr: <g><path d="M10 4q-6-3-7 1 0 3 4 3-5 0-5 3.500 1 4.500 8 1.500" fill="none" stroke="#777" strokeWidth="1.800" /><path d="M12 13h11v3l-3 2v5l-4-1v-4l-4-3Z" fill="#ddd" stroke="#888" /></g>,
  chipGray: <g stroke="#777" fill="none" strokeWidth="1.800"><path d="M3 6h18v12H3Z" fill="#fff" /><path d="M6 2.500v3.500M10 2.500v3.500M14 2.500v3.500M18 2.500v3.500M6 18v3.500M10 18v3.500M14 18v3.500M18 18v3.500" /></g>,
  funnelGray: <path d="M2 2.500h20v4l-7.500 7v7.500l-5 2V13.500L2 6.500ZM2 6.500h20" fill="#fff" stroke="#777" strokeWidth="1.800" />,
  polygon: <Polygon />,
  tableGray: <g><path d="M1.500 1h21v22h-21Z" fill="#fff" stroke="#777" strokeWidth="1.500" /><path d="M1.500 2h21v4h-21Z" fill="#ccc" /><path d="M4.500 9.500h5M12 9.500h8M4.500 13.500h5M12 13.500h8M4.500 17.500h5M12 17.500h8M4.500 21h5M12 21h8M4.500 4h5M12 4h8" stroke="#777" strokeWidth="1.500" /></g>,
  brushGray: <BrushMuted />,
  tagHalo: <g><text x="1" y="15" fontSize="12" fontWeight="700" fontFamily="Noto Sans, sans-serif" fill="#333" stroke="#e6ecf5" strokeWidth="6" paintOrder="stroke" strokeLinejoin="round">abc</text></g>,
  tagYellow: <g><path d="M2 12l4-6h17v12H6Z" fill="#fbe04a" stroke="#c4a11c" /><text x="5.500" y="15.500" fontSize="9" fontWeight="700" fontFamily="Noto Sans, sans-serif" fill="#333">abc</text></g>,
  cube: <g stroke="#fff" strokeWidth=".500"><path d="M12 1l10.500 6.500L12 13.500 1.500 7.500Z" fill="#f58a8e" stroke="#b3131c" strokeWidth="1.600" /><path d="M1.500 8L12 14v9.500L1.500 18Z" fill="#7fd32c" /><path d="M22.500 8L12 14v9.500L22.500 18Z" fill="#f9dc3c" /></g>,
  nodes: <g><path d="M10 5H6v11M14 5h5v11" stroke="#c67a22" strokeWidth="2.600" fill="none" /><path d="M11 8h3v12h-3Z" fill="#c67a22" /><path d="M7.500 1h9v7.500h-9Z" fill="#ef4b4b" /><path d="M1 16h9v7.500H1Z" fill="#fbe04a" /><path d="M14 16h9v7.500h-9Z" fill="#8fbdf0" /></g>,
  history: <g><path d="M12 6L6 1v3q-6 1-5 6t6 4q-4-4-1-5v3Z" fill="#83bd8a" /><path d="M10 16l6-6v3.500q7 0 7 5-1 4-6 5 3-4-1-5v3Z" fill="#e8803c" /></g>,
  back: <path d="M18 2v20L5 12Z" fill="#5a8cc6" stroke="#27496f" strokeWidth="1.200" />,
  plus: <g><path d="M9 2h6v7h7v6h-7v7H9v-7H2V9h7Z" fill="#fff" stroke="#4d8f55" strokeWidth="1.500" /><path d="M12 4.500v15M4.500 12h15" stroke="#4d8f55" strokeWidth="2.600" /></g>,
  minus: <path d="M2 9h20v6H2Z" fill="#eedbd5" stroke="#d4c4c0" strokeWidth="1.500" />,
  upTri: <path d="M12 3l10 18H2Z" fill="#d4d8dd" stroke="#aaa" />,
  downTri: <path d="M12 21L2 3h20Z" fill="#d4d8dd" stroke="#aaa" />,
  dup: <g fill="#f6f6f6" stroke="#aaa" strokeWidth="1.400"><path d="M2 2h13v18H2Z" /><path d="M6 2h15v20H6Z" /><path d="M14 15h6v6h-6Z" fill="#e8ddc4" /></g>,
  unlock: <g><path d="M8 5q0-3 4-3t5 4v6" fill="none" stroke="#bbb" strokeWidth="2.500" /><path d="M4 11h16v11H4Z" fill="#ddd6c4" stroke="#b9b5a6" /></g>,
  lock: <g><path d="M6.500 11V7q0-5 5.500-5t5.500 5v4" fill="none" stroke="#888" strokeWidth="2.500" /><rect x="3.500" y="10.500" width="17" height="12" rx="2" fill="#5f5f5f" /></g>,
  override: <g><path d="M8 4L1 12l7 8Z" fill="#888" /><path d="M7 1.500h14v21H7Z" fill="#fff" stroke="#666" strokeWidth="1.400" /><path d="M9.500 6h9M9.500 12h9M9.500 18h9" stroke="#666" strokeWidth="1.600" /><path d="M16 17h8l-4 5Z" fill="#444" /></g>,
  search: <g fill="none" stroke="#8a8a8a"><circle cx="9.500" cy="9" r="7" strokeWidth="1.800" /><path d="M14.500 14.500l7.500 7.500" strokeWidth="2.600" /></g>,
  clear: <g><path d="M1 12L7 4h16v16H7Z" fill="#8c8c8c" /><path d="M11 8l7.500 8M18.500 8L11 16" stroke="#fff" strokeWidth="1.600" /></g>,
  extents: <g stroke="#333" fill="none" strokeWidth="1.800"><path d="M2 3l8 8M6 1l8 9M2 8l7 6M15 12l6-7M20 9l3-3" /><circle cx="9" cy="12" r="3" fill="#fff" /><circle cx="16" cy="18" r="4" fill="#fff" /><path d="M4 18l5 5" /></g>,
  globeGray: <g><path d="M12 3a9 9 0 0 1 9 8h2.500v3H21a9 9 0 0 1-18 0H.500v-3H3a9 9 0 0 1 9-8Z" fill="#6a6a6a" /><path d="M12 3v20M3 12.500h18M5 7.500h14M5 18h14M7 4.500q-3 8 0 16M17 4.500q3 8 0 16" stroke="#ddd" strokeWidth="1.200" fill="none" /></g>,
  bubble: <g><path d="M12 1.500q11 0 11 9 0 5-4 7.500l2 5.500-7-4.200q-13 0.700-13-8.800 0-9 11-9Z" fill="#5a5a5a" /><g fill="#fff"><circle cx="7" cy="10.500" r="1.600" /><circle cx="12" cy="10.500" r="1.600" /><circle cx="17" cy="10.500" r="1.600" /></g></g>,
  float: <g fill="none" stroke="#555" strokeWidth="2"><rect x="1" y="1" width="22" height="22" rx="4" strokeWidth="1.800" /><path d="M6 10h8v8H6ZM10 10V6h8v8h-4" /></g>,
  close: <g fill="none" stroke="#444"><rect x="1" y="1" width="22" height="22" rx="4" strokeWidth="1.800" /><path d="M6.500 6.500l11 11M17.500 6.500l-11 11" strokeWidth="4" /></g>,
};

const Icon = ({ name, size = 24 }) => (
  <svg width={size} height={size} viewBox="0 0 24 24" aria-hidden="true">{art[name]}</svg>
);

/* ---------- shared parts ---------- */

const Window = styled.div`
  height: 100vh;
  display: flex;
  flex-direction: column;
`;

const frame = css`
  border: 1px solid #b4b4b4;
  background: #fff;
`;

const raised = css`
  border: 1px solid #ababab;
  border-radius: 3px;
  background: linear-gradient(#fefefe, #f1f1f1);
`;

const Caret = styled.span`
  flex: none;
  width: 0;
  height: 0;
  border: 4px solid transparent;
  border-bottom-width: 0;
  border-top: 5px solid ${(p) => (p.$dim ? "#a8a8a8" : "#5a5a5a")};
  ${(p) => p.$up && css`transform: rotate(180deg);`}
  ${(p) => p.$right && css`transform: rotate(-90deg);`}
`;

const Check = styled.input.attrs({ type: "checkbox" })`
  appearance: none;
  flex: none;
  width: 14px;
  height: 14px;
  border: 1px solid #b8b8b8;
  background: #fff;
  &:checked::before {
    content: "";
    display: block;
    width: 10px;
    height: 10px;
    margin: 1px;
    background: #000;
    clip-path: polygon(8% 48%, 24% 40%, 40% 66%, 78% 2%, 96% 2%, 46% 96%, 32% 96%);
  }
`;

/* ---------- title and menu ---------- */

const TitleBar = styled.header`
  flex: none;
  height: 23px;
  padding: 0 2px 1px 2px;
  display: flex;
  align-items: center;
  gap: 5px;
  background: #fff;
  h1 { margin: 0; flex: 1; font: 11px/16px ${uiFont}; }
`;

const WindowButton = styled.button`
  width: 46px;
  height: 22px;
  border: 0;
  background: none;
  display: grid;
  place-items: center;
`;

const MenuBar = styled.nav`
  flex: none;
  height: 20px;
  padding-left: 2px;
  display: flex;
  align-items: center;
  border-bottom: 1px solid #dadada;
`;

const MenuItem = styled.button`
  height: 19px;
  padding: 0 7px;
  border: 0;
  background: none;
  font: 12px/18px ${labelFont};
  white-space: nowrap;
  u { text-underline-offset: 2px; }
`;

/* ---------- toolbars ---------- */

const Bar = styled.div`
  flex: none;
  height: ${(p) => (p.$last ? 38 : 39)}px;
  display: flex;
  align-items: center;
  gap: 4px;
  border-bottom: 1px solid #b2b2b2;
  background: linear-gradient(#fbfbfb, #ededed);
`;

const BarGroup = styled.div`
  display: flex;
  align-items: center;
`;

const Grip = styled.span`
  flex: none;
  width: ${(p) => (p.$flat ? 18 : 5)}px;
  height: ${(p) => (p.$flat ? 5 : 18)}px;
  background: radial-gradient(circle, #b0b0b0 35%, transparent 45%) 0 0 / 3px 3px;
`;

const GripSlot = styled.span`
  flex: none;
  width: 12px;
  padding-left: 4px;
`;

const Tool = styled.button`
  flex: none;
  width: 33px;
  height: 32px;
  padding: 0;
  border: 1px solid ${(p) => (p.$on ? "#a5a5a5" : "transparent")};
  border-radius: 3px;
  background: ${(p) => (p.$on ? "#dadada" : "none")};
  display: grid;
  place-items: center;
  svg { ${(p) => p.$dim && css`opacity: 0.35; filter: grayscale(0.7);`} }
`;

const Arrow = styled.button`
  flex: none;
  width: 13px;
  height: 32px;
  padding-left: 3px;
  border: 0;
  background: none;
  display: flex;
  align-items: center;
`;

const Divider = styled.span`
  width: 7px;
  height: 20px;
  background: linear-gradient(90deg, transparent 3px, #cdcdcd 3px 4px, transparent 4px);
`;

/* "-" draws a divider, "~" dims a tool, "*" marks it pressed, ">" adds a menu arrow */
const bars = [
  [
    "page folder save newLayout manager styles",
    "hand pan zoomIn *zoomOut zoomFull ~zoomSel zoomLayer ~zoomNative zoomLast ~zoomNext mapView map3d newMark marks clock refresh",
    "identify table abacus gear sigma >measure tip ~>action >annot",
  ],
  [
    "dataSource geopkg shape feather chip - virtual -",
    "~edits pencil ~saveEdit ~addPoly ~>vertex ~modify ~trash ~cut ~copy ~paste ~undo ~redo",
    "tag diagram - tagBlue tagRed - tagPin tagEye tagMove tagTurn tagEdit",
    "globePlus globeFind",
    "python pixels earth",
    "help",
    "topo reload",
  ],
  ["plot", "quickSearch osm", "", "", ">selectFeat >selectForm >deselect selectLoc"],
];

const ToolGroup = ({ spec }) => (
  <BarGroup>
    <GripSlot><Grip as="div" /></GripSlot>
    {spec.split(" ").filter(Boolean).map((word, i) => {
      if (word === "-") return <Divider key={i} />;
      const name = word.replace(/[~*>]/g, "");
      const dim = word.includes("~");
      return (
        <React.Fragment key={i}>
          <Tool $dim={dim} $on={word.includes("*")} aria-label={name}><Icon name={name} /></Tool>
          {word.includes(">") && <Arrow aria-label={`${name} menu`}><Caret $dim={dim} /></Arrow>}
        </React.Fragment>
      );
    })}
  </BarGroup>
);

/* ---------- work area ---------- */

const Work = styled.main`
  flex: 1;
  min-height: 0;
  display: grid;
  grid-template-columns: 52px 365px 6px minmax(0, 1fr) 9px 410px;
  grid-template-rows: minmax(0, 1fr);
`;

const SideBar = styled.div`
  display: flex;
  flex-direction: column;
  padding: 0 0 0 3px;
  border-right: 1px solid #b4b4b4;
  background: linear-gradient(90deg, #fafafa, #ededed);
`;

const SideGrip = styled.div`
  height: 12px;
  padding: 6px 0 0 16px;
`;

const SideRow = styled.div`
  display: flex;
  ${Arrow} { width: 12px; padding-left: 2px; }
`;

const Splitter = styled.div`
  display: flex;
  align-items: center;
  justify-content: center;
  ${(p) => p.$flat && css`height: 6px;`}
`;

const Docks = styled.div`
  display: flex;
  flex-direction: column;
  min-height: 0;
  padding-top: 1px;
`;

const DockHead = styled.div`
  flex: none;
  height: 20px;
  padding: 0 2px 0 4px;
  display: flex;
  align-items: center;
  gap: 3px;
  h2 { margin: 0; flex: 1; font: 12px/16px ${labelFont}; }
`;

const PanelHead = styled(DockHead)`
  padding: 0 0 0 1px;
  margin-right: -1px;
`;

const DockButton = styled.button`
  width: 11px;
  height: 11px;
  border: 0;
  background: none;
`;

const DockTools = styled.div`
  flex: none;
  height: 30px;
  padding: 0 0 2px 4px;
  display: flex;
  align-items: center;
  gap: 1px;
  ${Tool} { width: 24px; height: 24px; }
  ${Arrow} { height: 24px; padding-left: 0; }
`;

const Tree = styled.div`
  ${frame}
  display: flex;
  min-height: 0;
  flex: ${(p) => (p.$h ? `0 0 ${p.$h}px` : "1")};
`;

const Rows = styled.ul`
  flex: 1;
  min-width: 0;
  margin: 0;
  padding: ${(p) => p.$top || 0}px 0 0;
  list-style: none;
  overflow: hidden;
`;

const Row = styled.li`
  height: 18px;
  padding-right: 4px;
  display: flex;
  align-items: center;
  gap: 6px;
  font-weight: ${(p) => (p.$bold ? 700 : 400)};
  font-style: ${(p) => (p.$off ? "italic" : "normal")};
  color: ${(p) => (p.$off ? "#7a7a7a" : "#000")};
  white-space: nowrap;
  font-size: ${(p) => (p.$bold ? 11 : 12)}px;
  font-family: ${(p) => (p.$bold ? uiFont : labelFont)};
  label { flex: 1; text-decoration: ${(p) => (p.$line ? "underline" : "none")}; text-underline-offset: 2px; }
`;

const Twist = styled.span`
  flex: none;
  width: ${(p) => p.$w}px;
  margin-right: -6px;
  padding-left: 5px;
  display: flex;
`;

const Swatch = styled.span`
  flex: none;
  width: ${(p) => p.$s || 16}px;
  height: ${(p) => p.$s || 16}px;
  border: 1px solid rgba(40, 40, 20, 0.5);
  background: ${(p) => p.$c};
`;

const Dot = styled.span`
  flex: none;
  width: 8px;
  height: 8px;
  margin: 0 4px;
  border: 1px solid #555;
  border-radius: 50%;
  background: ${(p) => p.$c};
`;

const Dash = styled.span`
  flex: none;
  width: 14px;
  height: 2px;
  background: ${(p) => p.$c};
`;

const Mark = styled.button`
  flex: none;
  width: 16px;
  height: 16px;
  margin-right: -4px;
  border: 1px solid #dcdcdc;
  background: #f6f6f6;
  display: grid;
  place-items: center;
  &:last-child { margin-right: 0; }
`;

const ScrollBox = styled.div`
  flex: none;
  width: 15px;
  display: flex;
  flex-direction: column;
  border-left: 1px solid #c4c4c4;
  background: #fff;
`;

const ScrollEnd = styled.button`
  flex: none;
  height: 14px;
  border: 0 solid #c4c4c4;
  border-bottom-width: ${(p) => (p.$up ? 1 : 0)}px;
  border-top-width: ${(p) => (p.$up ? 0 : 1)}px;
  background: #fff;
  display: grid;
  place-items: center;
`;

const ScrollRest = styled.span`
  flex: 0 0 ${(p) => p.$h}px;
  margin-top: auto;
  border-top: 1px solid #c4c4c4;
  background: #e6e6e6;
`;

const Scroll = ({ rest }) => (
  <ScrollBox>
    <ScrollEnd $up aria-label="Scroll up"><Caret $up /></ScrollEnd>
    <ScrollRest $h={rest} />
    <ScrollEnd aria-label="Scroll down"><Caret /></ScrollEnd>
  </ScrollBox>
);

const HeadButtons = () => (
  <>
    <DockButton aria-label="Float"><Icon name="float" size={11} /></DockButton>
    <DockButton aria-label="Close"><Icon name="close" size={11} /></DockButton>
  </>
);

const layers = [
  { t: "Grid", open: true, on: true, icon: "polygon", line: true },
  { t: "0 - 0.89", kid: true, on: true, c: "#5b87a6" },
  { t: "0.89 - 1.07", kid: true, on: true, c: "#5ec796" },
  { t: "1.07 - 1001", kid: true, on: true, c: "#fef5c0" },
  { t: "green_spaces_gridded", on: true, c: "#8e5a99" },
  { t: "builtup_spaces_gridded", on: true, c: "#729b6f" },
  { t: "pow_cleaned [10]", dot: "#dcec1c", marks: ["chipGray", "funnelGray"] },
  { t: "green_spaces_gridded", table: true },
  { t: "builtup_spaces_gridded", table: true },
  { t: "Intersection", shut: true, on: true, icon: "polygon", marks: ["chipGray"] },
  { t: "schools [104]", dot: "#d911a0" },
  { t: "Buffered", c: "#beb297", marks: ["chipGray"] },
  { t: "pow [313]", dot: "#1fe553" },
  { t: "road", dash: "#51519c" },
  { t: "waterway", dash: "#cb7076" },
  { t: "Clipped [2]", c: "#e5b636", marks: ["chipGray"] },
  { t: "buildings cleaned [298]", c: "#92502d", marks: ["chipGray"] },
  { t: "buildings [300]", c: "#92502d" },
  { t: "landuse [9]", on: true, c: "#ff9e17", marks: ["funnelGray"] },
  { t: "Voronoi polygons", c: "#e15989", marks: ["chipGray"] },
  { t: "", c: "#987db7" },
];

const LayerRow = ({ l, id }) => {
  const off = !l.on && !l.table;
  return (
    <Row $bold={!l.kid} $off={off} $line={l.line}>
      <Twist $w={(l.kid ? 43 : 23) + (l.table ? 1 : 0)}>{(l.open || l.shut) && <Caret $right={l.shut} />}</Twist>
      {l.table ? <Icon name="tableGray" size={14} /> : <Check id={id} defaultChecked={l.on} aria-label={l.t || "layer"} />}
      {l.icon && <Icon name={l.icon} size={16} />}
      {l.c && <Swatch $c={l.c} $s={l.kid ? 18 : 16} />}
      {l.dot && <Dot $c={l.dot} />}
      {l.dash && <Dash $c={l.dash} />}
      <label htmlFor={l.table ? undefined : id}>{l.t}</label>
      {l.marks && l.marks.map((m) => <Mark key={m} aria-label={m}><Icon name={m} size={14} /></Mark>)}
    </Row>
  );
};

/* ---------- map ---------- */

const Canvas = styled.section`
  ${frame}
  margin-top: 1px;
  padding: 0 12px;
  display: flex;
  align-items: center;
  svg { width: 100%; height: auto; max-height: 100%; }
  text { font: 13px ${formFont}; text-anchor: middle; }
`;

const city = "1140,68 1170,50 1235,36 1245,70 1258,95 1262,130 1250,125 1228,158 1228,178 1225,172 1195,185 1140,212 1138,230 1142,255 1152,262 1146,285 1140,300 1143,315 1136,325 1146,340 1146,390 1158,430 1165,455 1180,490 1205,498 1210,470 1218,458 1250,470 1245,510 1262,515 1295,505 1308,500 1300,485 1285,478 1284,466 1310,470 1328,478 1330,465 1318,460 1320,440 1308,420 1310,405 1283,408 1275,385 1300,368 1315,353 1330,372 1320,405 1358,372 1365,390 1385,432 1430,415 1420,385 1440,380 1440,365 1470,370 1480,365 1490,350 1492,370 1503,390 1480,400 1455,405 1462,430 1470,440 1475,465 1435,485 1405,492 1400,510 1390,535 1412,548 1395,575 1378,585 1390,610 1382,630 1388,645 1383,665 1340,655 1335,690 1336,730 1330,758 1285,762 1258,765 1245,750 1200,745 1145,735 1115,755 1110,800 1100,802 1068,795 1072,808 1050,815 1042,830 1045,850 1040,858 1068,880 1070,938 1130,955 1142,990 1170,1005 1200,1030 1280,1004 1290,1030 1320,1078 1270,1095 1250,1130 1248,1173 1160,1165 1148,1170 1148,1195 1120,1190 1100,1170 1068,1158 1065,1185 1070,1225 1050,1230 1040,1250 1010,1280 968,1285 958,1325 972,1370 930,1380 910,1395 908,1430 900,1462 870,1452 850,1462 840,1500 832,1480 800,1475 803,1445 785,1438 795,1470 755,1470 752,1440 720,1430 680,1390 672,1380 665,1340 655,1310 640,1295 615,1300 610,1320 570,1355 495,1360 485,1398 470,1370 430,1378 380,1375 382,1350 350,1340 340,1325 335,1275 280,1270 230,1262 225,1275 195,1250 180,1218 158,1218 153,1245 120,1258 90,1265 80,1255 75,1218 40,1217 22,1180 40,1172 75,1162 72,1110 43,1060 75,1027 150,980 140,950 125,873 172,878 175,850 220,850 232,770 242,765 250,700 257,690 253,648 300,640 340,620 388,590 395,628 405,630 425,655 465,635 470,668 500,655 545,635 555,608 578,612 578,640 590,625 615,615 630,600 628,585 626,560 648,555 640,530 628,480 638,440 635,425 650,390 700,398 702,380 670,370 668,345 690,325 665,310 650,300 622,272 640,240 655,237 680,255 695,270 745,245 750,250 798,240 798,210 820,208 840,230 890,232 892,200 955,183 958,205 1000,207 1048,195 1048,152 1110,152 1132,150 1148,172 1182,150 1182,118 1165,115";

const ratio = {};
[132, 133, 186, 211, 231, 250, 251, 271, 233, 253].forEach((n) => { ratio[n] = "#59c08d"; });
[170, 172, 213, 230].forEach((n) => { ratio[n] = "#567f9f"; });

const side = 497;
const cell = side / 20;
const steps = Array.from({ length: 21 }, (_, i) => i * cell);

const CityGrid = () => (
  <svg viewBox={`0 0 ${side} ${side}`} role="img" aria-label="Numbered grid over the city">
    <rect width={side} height={side} fill="#fef6bf" />
    <g transform="scale(.3333) translate(-19 -34)">
      <polygon points={city} fill="#f9dfa4" stroke="#7b7440" strokeWidth="3" strokeLinejoin="round" />
    </g>
    {Object.keys(ratio).map((k) => {
      const n = Number(k) - 1;
      return <rect key={k} x={Math.floor(n / 20) * cell} y={(n % 20) * cell} width={cell} height={cell} fill={ratio[k]} stroke="#2c4a3c" />;
    })}
    <path d="M302 246l8-1 12 1-6 8 1 8-5 1-4-6-7-5Z" fill="#2f9a6c" fillOpacity=".700" />
    <g stroke="#5d5a3c" strokeOpacity=".600" strokeWidth="1.200">
      {steps.map((s) => <path key={s} d={`M0 ${s}H${side}M${s} 0V${side}`} />)}
    </g>
    {Array.from({ length: 400 }, (_, i) => (
      <text key={i} x={(Math.floor(i / 20) + 0.5) * cell} y={(i % 20) * cell + 17}>{i + 1}</text>
    ))}
  </svg>
);

/* ---------- styling panel ---------- */

const StylePanel = styled.div`
  display: flex;
  flex-direction: column;
  min-height: 0;
  padding: 1px 3px 3px 0;
  font: 11px/16px ${formFont};
`;

const Picker = styled.div`
  ${raised}
  flex: none;
  height: 22px;
  display: flex;
  align-items: center;
  padding-left: 3px;
  select {
    flex: 1;
    min-width: 0;
    height: 100%;
    border: 0;
    appearance: none;
    background: none;
    outline: 0;
    font: 11px/16px ${labelFont};
  }
  > ${Caret} { margin-right: 6px; }
`;

const LayerPicker = styled(Picker)`
  height: 24px;
  margin-top: 2px;
  padding-left: 5px;
  select { padding-left: 2px; }
`;

const PanelBody = styled.div`
  flex: 1;
  min-height: 0;
  display: flex;
`;

const Tabs = styled.div`
  flex: none;
  width: 41px;
  padding-right: 3px;
  display: flex;
  flex-direction: column;
`;

const Tab = styled.button`
  width: 30px;
  height: 32px;
  border: 0;
  background: none;
  display: grid;
  place-items: center;
`;

const TabTop = styled(Tab)`
  width: 36px;
  height: 38px;
  padding-top: 4px;
`;

const TabDark = styled.div`
  flex: 1;
  background: #5c5c5c;
`;

const PanelMain = styled.div`
  flex: 1;
  min-width: 0;
  display: flex;
  flex-direction: column;
`;

const Crumb = styled.div`
  flex: none;
  height: 35px;
  display: flex;
  align-items: center;
  gap: 9px;
`;

const Push = styled.button`
  ${raised}
  flex: none;
  width: ${(p) => p.$w || 24}px;
  height: ${(p) => p.$h || 24}px;
  display: grid;
  place-items: center;
  ${(p) => p.$dim && css`border-color: #c8c8c8; svg { opacity: 0.6; }`}
`;

const ApplyButton = styled(Push)`
  font: 12px/16px ${labelFont};
`;

const ScrollPane = styled.div`
  flex: 1;
  min-height: 0;
  display: flex;
`;

const Pane = styled.div`
  flex: 1;
  min-width: 0;
  overflow: hidden;
`;

const SymbolTop = styled.div`
  height: 143px;
  display: flex;
  border-bottom: 1px solid #a0a0a0;
`;

const Preview = styled.div`
  flex: 1;
  display: grid;
  place-items: center;
  height: 136px;
  padding-right: 4px;
`;

const SymbolTree = styled.ul`
  ${frame}
  width: 178px;
  height: 136px;
  margin: 0 6px 0 0;
  padding: 0;
  list-style: none;
  li { height: 18px; display: flex; align-items: center; font-size: 12px; font-family: ${labelFont}; }
`;

const FillRow = styled.li`
  padding-left: 6px;
  gap: 6px;
  background: #f0f0f0;
  font-weight: 700;
  ${Swatch} { margin: 0 0 0 3px; border-color: #c3c9a8; }
`;

const SimpleRow = styled.li`
  padding-left: 43px;
  gap: 6px;
`;

const PushGrid = styled.div`
  display: grid;
  grid-template-columns: 28px 28px;
  grid-auto-rows: 24px;
  gap: 5px 6px;
`;

const Form = styled.div`
  margin-right: 9px;
  display: grid;
  grid-template-columns: 43px minmax(0, 1fr);
  align-items: center;
  row-gap: 8px;
  padding: 8px 0 4px;
  border-bottom: 1px solid #a0a0a0;
  > span, > label { font: 11px/16px ${labelFont}; }
  ${Tool} { width: 30px; height: 21px; }
`;

const FieldLine = styled.div`
  display: flex;
  align-items: center;
  gap: ${(p) => p.$gap || 0}px;
`;

const ColorButton = styled(Push)`
  flex: 1;
  height: 23px;
  padding: 2px 4px;
`;

const ColorFill = styled.span`
  width: 100%;
  height: 17px;
  border-radius: 4px;
  background: #ffe623;
`;

const Slider = styled.input.attrs({ type: "range" })`
  appearance: none;
  flex: 1;
  min-width: 0;
  height: 16px;
  background: none;
  &::-webkit-slider-runnable-track {
    height: 5px;
    border: 1px solid #b0b0b0;
    border-radius: 2px;
    background: linear-gradient(90deg, #2089e8 33%, #cfcfcf 33%);
  }
  &::-webkit-slider-thumb {
    appearance: none;
    width: 13px;
    height: 13px;
    margin-top: -5px;
    border: 1px solid #a8a8a8;
    border-radius: 3px;
    background: #fff;
  }
`;

const Field = styled.div`
  border: 1px solid #ababab;
  border-radius: 3px;
  background: #fff;
  flex: ${(p) => (p.$w ? "none" : 1)};
  width: ${(p) => (p.$w ? `${p.$w}px` : "auto")};
  height: ${(p) => p.$h || 21}px;
  display: flex;
  align-items: center;
  overflow: hidden;
  input {
    flex: 1;
    min-width: 0;
    height: 100%;
    border: 0;
    outline: 0;
    padding-left: ${(p) => p.$pad || 5}px;
    background: none;
  }
  input::placeholder { color: #7b7b7b; opacity: 1; }
`;

const FilterField = styled(Field)`
  input { font: 11px/16px ${labelFont}; }
`;

const Steps = styled.span`
  align-self: stretch;
  width: 14px;
  margin-left: 9px;
  border-left: 1px solid #c4c4c4;
  background: #f6f6f6;
  display: flex;
  flex-direction: column;
  align-items: center;
  justify-content: center;
  gap: 3px;
`;

const Drop = styled.button`
  align-self: stretch;
  width: 19px;
  border: 0;
  border-left: 1px solid #c4c4c4;
  background: linear-gradient(#fefefe, #f1f1f1);
  display: grid;
  place-items: center;
`;

const FilterLine = styled.div`
  margin: 6px 9px 4px 0;
  display: flex;
  align-items: center;
  gap: 11px;
  padding-right: 3px;
`;

const Gallery = styled.div`
  ${frame}
  height: 148px;
  margin-right: 9px;
  display: flex;
`;

const Samples = styled.ul`
  flex: 1;
  margin: 0;
  padding: 20px 20px 0 3px;
  list-style: none;
  display: grid;
  grid-template-columns: repeat(3, minmax(0, 1fr));
  grid-auto-rows: 119px;
  overflow: hidden;
`;

const Sample = styled.li`
  display: flex;
  flex-direction: column;
  align-items: center;
  gap: 14px;
  line-height: 15px;
  text-align: center;
  white-space: pre;
`;

const SamplePic = styled.span`
  width: 64px;
  height: 55px;
  border: 1px solid ${(p) => p.$line};
  background: ${(p) => p.$fill};
  background-origin: border-box;
`;

const Peek = styled.div`
  display: flex;
  gap: 7px;
  margin: 6px 9px 0 0;
  ${Push}:nth-child(2) { margin-left: auto; }
`;

const Actions = styled.div`
  flex: none;
  height: 29px;
  padding-top: 6px;
  display: flex;
  align-items: flex-start;
  gap: 6px;
  position: relative;
`;

const LiveLabel = styled.label`
  margin: 3px 6px 0 auto;
  display: flex;
  align-items: center;
  gap: 4px;
  font: 11px/16px ${labelFont};
`;

const Watermark = styled.div`
  position: absolute;
  left: 76px;
  bottom: 2px;
  color: rgba(130, 130, 130, 0.55);
  white-space: nowrap;
  pointer-events: none;
  font: 14px/20px ${uiFont};
  strong { display: block; font: 19px/24px ${uiFont}; }
`;

const samples = [
  ["gradient\nplasma", "radial-gradient(circle at 0 0, #15077f, #8405a7 33%, #d8576b 60%, #f89540 80%, #f7e225 100%)", "#222"],
  ["gradient  gray fill", "linear-gradient(#555, #c8c8c8)", "#a8a53c"],
  ["gradient blue fill", "linear-gradient(#2f6fa3, #45a5f0)", "#4980a8"],
  ["", "#5c2a14", "#a0583c"],
  ["", "#419a42", "#2f7a30"],
  ["", "#c96105", "#8f4707"],
];

/* ---------- status bar ---------- */

const StatusBar = styled.footer`
  flex: none;
  height: 28px;
  padding: 0 8px 0 4px;
  display: flex;
  align-items: center;
  gap: 8px;
  font: 11px/16px ${formFont};
  label { font: 11px/16px ${labelFont}; }
`;

const StatusGroup = styled.div`
  display: flex;
  align-items: center;
  gap: ${(p) => p.$gap || 4}px;
  margin-left: ${(p) => p.$push || 0}px;
`;

const Message = styled.span`
  flex: 1;
  font: 11px/16px ${labelFont};
`;

const menus = ["Pro|j|ect", "|E|dit", "|V|iew", "|L|ayer", "|S|ettings", "|P|lugins", "Vect|o|r", "|R|aster", "|D|atabase", "|W|eb", "|M|esh", "Pro|c|essing", "|H|elp"];

export default function App() {
  return (
    <Window>
      <GlobalStyle />
      <TitleBar>
        <Icon name="qgis" size={16} />
        <h1>*Untitled Project — QGIS</h1>
        <BarGroup>
          <WindowButton aria-label="Minimize"><svg width="11" height="11"><path d="M0 5.500h11" stroke="#111" /></svg></WindowButton>
          <WindowButton aria-label="Restore"><svg width="11" height="11" fill="none" stroke="#111"><path d="M.500 2.500h8v8h-8ZM2.500 2.500v-2h8v8h-2" /></svg></WindowButton>
          <WindowButton aria-label="Close"><svg width="11" height="11"><path d="M.500.500l10 10M10.500.500l-10 10" stroke="#111" /></svg></WindowButton>
        </BarGroup>
      </TitleBar>
      <MenuBar>
        {menus.map((m) => {
          const [a, b, c] = m.split("|");
          return <MenuItem key={m}>{a}<u>{b}</u>{c}</MenuItem>;
        })}
      </MenuBar>
      {bars.map((groups, i) => (
        <Bar key={i} $last={i === bars.length - 1}>{groups.map((g, j) => <ToolGroup key={j} spec={g} />)}</Bar>
      ))}

      <Work>
        <SideBar>
          <SideGrip><Grip as="div" $flat /></SideGrip>
          {["vAdd", "rasterAdd", "meshAdd", "csvAdd", "featherAdd", "virtualAdd", ">pgAdd", "wmsAdd", "wcsAdd", "wfsAdd", ">geopkg"].map((w) => {
            const name = w.replace(">", "");
            return (
              <SideRow key={name}>
                <Tool aria-label={name}><Icon name={name} /></Tool>
                {w !== name && <Arrow aria-label={`${name} menu`}><Caret /></Arrow>}
              </SideRow>
            );
          })}
        </SideBar>

        <Docks>
          <DockHead><h2>Browser</h2><HeadButtons /></DockHead>
          <DockTools>
            {["boxAdd", "refresh", "funnel", "collapse", "info"].map((n) => <Tool key={n} aria-label={n}><Icon name={n} size={16} /></Tool>)}
          </DockTools>
          <Tree $h={70}>
            <Rows $top={1}>
              {[["Favorites", "star"], ["Spatial Bookmarks", "bookmark", 1], ["GeoPackage", "geopkgPlain"], ["Home", "home", 1]].map(([t, n, kids]) => (
                <Row key={t}>
                  <Twist $w={19}>{kids && <Caret $right />}</Twist>
                  <Icon name={n} size={16} />
                  <span>{t}</span>
                </Row>
              ))}
            </Rows>
            <Scroll rest={14} />
          </Tree>
          <Splitter $flat><Grip $flat /></Splitter>
          <DockHead><h2>Layers</h2><HeadButtons /></DockHead>
          <DockTools>
            <Tool $on aria-label="Styling"><Icon name="brush" size={16} /></Tool>
            {["group", "eye", "funnelMenu"].map((n) => <Tool key={n} aria-label={n}><Icon name={n} size={16} /></Tool>)}
            <Tool $dim aria-label="Expression"><Icon name="expr" size={16} /></Tool>
            <Arrow aria-label="Expression menu"><Caret $dim /></Arrow>
            {["expand", "collapse", "boxDel"].map((n) => <Tool key={n} aria-label={n}><Icon name={n} size={16} /></Tool>)}
          </DockTools>
          <Tree>
            <Rows $top={1}>{layers.map((l, i) => <LayerRow key={i} l={l} id={`layer-${i}`} />)}</Rows>
            <Scroll rest={15} />
          </Tree>
        </Docks>

        <Splitter><Grip /></Splitter>
        <Canvas><CityGrid /></Canvas>
        <Splitter><Grip /></Splitter>

        <StylePanel>
          <PanelHead><h2>Layer Styling</h2><HeadButtons /></PanelHead>
          <LayerPicker>
            <Icon name="polygon" size={16} />
            <select aria-label="Layer"><option>Grid</option></select>
            <Caret />
          </LayerPicker>
          <PanelBody>
            <Tabs role="tablist">
              <TabTop aria-label="Symbology"><Icon name="brushGray" size={22} /></TabTop>
              <TabDark>
                {["tagYellow", "tagHalo", "cube", "nodes", "history"].map((n) => <Tab key={n} aria-label={n}><Icon name={n} size={22} /></Tab>)}
              </TabDark>
            </Tabs>
            <PanelMain>
              <Crumb><Push aria-label="Back"><Icon name="back" size={16} /></Push><span>1.07 - 1001</span></Crumb>
              <ScrollPane>
                <Pane>
                  <SymbolTop>
                    <Preview><Swatch $s={61} $c="#f2ecb4" /></Preview>
                    <SymbolTree>
                      <FillRow><Caret /><Swatch $c="#dde3c2" /><span>Fill</span></FillRow>
                      <SimpleRow><Swatch $c="#ffe623" /><span>Simple Fill</span></SimpleRow>
                    </SymbolTree>
                    <PushGrid>
                      {["plus", "upTri", "minus", "downTri", "dup", "unlock"].map((n) => (
                        <Push key={n} $w={28} $dim={n !== "plus"} aria-label={n}><Icon name={n} size={16} /></Push>
                      ))}
                    </PushGrid>
                  </SymbolTop>
                  <Form>
                    <span>Color</span>
                    <FieldLine>
                      <ColorButton aria-label="Color"><ColorFill /></ColorButton>
                      <Push $w={12} $h={23} aria-label="Color menu"><Caret /></Push>
                    </FieldLine>
                    <label htmlFor="opacity">Opacity</label>
                    <FieldLine $gap={4}>
                      <Slider id="opacity" defaultValue={30} />
                      <Field $w={100}>
                        <input aria-label="Opacity value" defaultValue="30.0 %" />
                        <Icon name="clear" size={13} />
                        <Steps><Caret $up /><Caret /></Steps>
                      </Field>
                      <Tool aria-label="Data defined override"><Icon name="override" size={20} /></Tool>
                    </FieldLine>
                    <label htmlFor="unit">Unit</label>
                    <Picker>
                      <select id="unit"><option>Millimeters</option></select>
                      <Caret />
                    </Picker>
                  </Form>
                  <FilterLine>
                    <FilterField $h={23} $pad={7}>
                      <StatusGroup $push={9}><Icon name="search" size={13} /></StatusGroup>
                      <input aria-label="Symbol filter" defaultValue="All Symbols" />
                      <Icon name="clear" size={13} />
                      <StatusGroup $push={9} />
                      <Drop aria-label="Symbol groups"><Caret /></Drop>
                    </FilterField>
                    <Icon name="styles" size={16} />
                  </FilterLine>
                  <Gallery>
                    <Samples>
                      {samples.map(([t, fill, line], i) => <Sample key={i}><SamplePic $fill={fill} $line={line} /><span>{t}</span></Sample>)}
                    </Samples>
                    <Scroll rest={92} />
                  </Gallery>
                  <Peek><Push /><Push $w={79} /><Push $w={79} /></Peek>
                </Pane>
                <Scroll rest={32} />
              </ScrollPane>
              <Actions>
                <Push aria-label="Undo"><Icon name="undoHot" size={14} /></Push>
                <Push aria-label="Redo"><Icon name="redoHot" size={14} /></Push>
                <LiveLabel><Check defaultChecked />Live update</LiveLabel>
                <ApplyButton $w={80} $h={22}>Apply</ApplyButton>
                <Watermark><strong>Activate Windows</strong>Go to Settings to activate Windows.</Watermark>
              </Actions>
            </PanelMain>
          </PanelBody>
        </StylePanel>
      </Work>

      <StatusBar>
        <Field $w={200} $h={22} $pad={8}>
          <StatusGroup $push={7}><Icon name="search" size={13} /></StatusGroup>
          <input aria-label="Locator" placeholder="Type to locate (Ctrl+K)" />
        </Field>
        <Message>1 legend entries removed.</Message>
        <StatusGroup>
          <label htmlFor="coord">Coordinate</label>
          <Field $w={101}><input id="coord" defaultValue="424513,-3074636" /></Field>
          <Icon name="extents" size={16} />
        </StatusGroup>
        <StatusGroup $push={4}>
          <label htmlFor="scale">Scale</label>
          <Field $w={81}><input id="scale" defaultValue="1:1520500" /><Drop aria-label="Scales"><Caret /></Drop></Field>
        </StatusGroup>
        <StatusGroup $push={3}>
          <Icon name="lock" size={16} />
          <label htmlFor="mag">Magnifier</label>
          <Field $w={87}><input id="mag" defaultValue="100%" /><Steps><Caret $up /><Caret /></Steps></Field>
        </StatusGroup>
        <StatusGroup $gap={9}>
          <label htmlFor="rot">Rotation</label>
          <Field $w={83}><input id="rot" defaultValue="0.0 °" /><Steps><Caret $up /><Caret /></Steps></Field>
        </StatusGroup>
        <StatusGroup>
          <Check id="render" defaultChecked />
          <label htmlFor="render">Render</label>
        </StatusGroup>
        <StatusGroup $push={9}>
          <Icon name="globeGray" size={16} />
          <span>ESRI:102022</span>
        </StatusGroup>
        <StatusGroup $push={9}><Icon name="bubble" size={16} /></StatusGroup>
      </StatusBar>
    </Window>
  );
}
